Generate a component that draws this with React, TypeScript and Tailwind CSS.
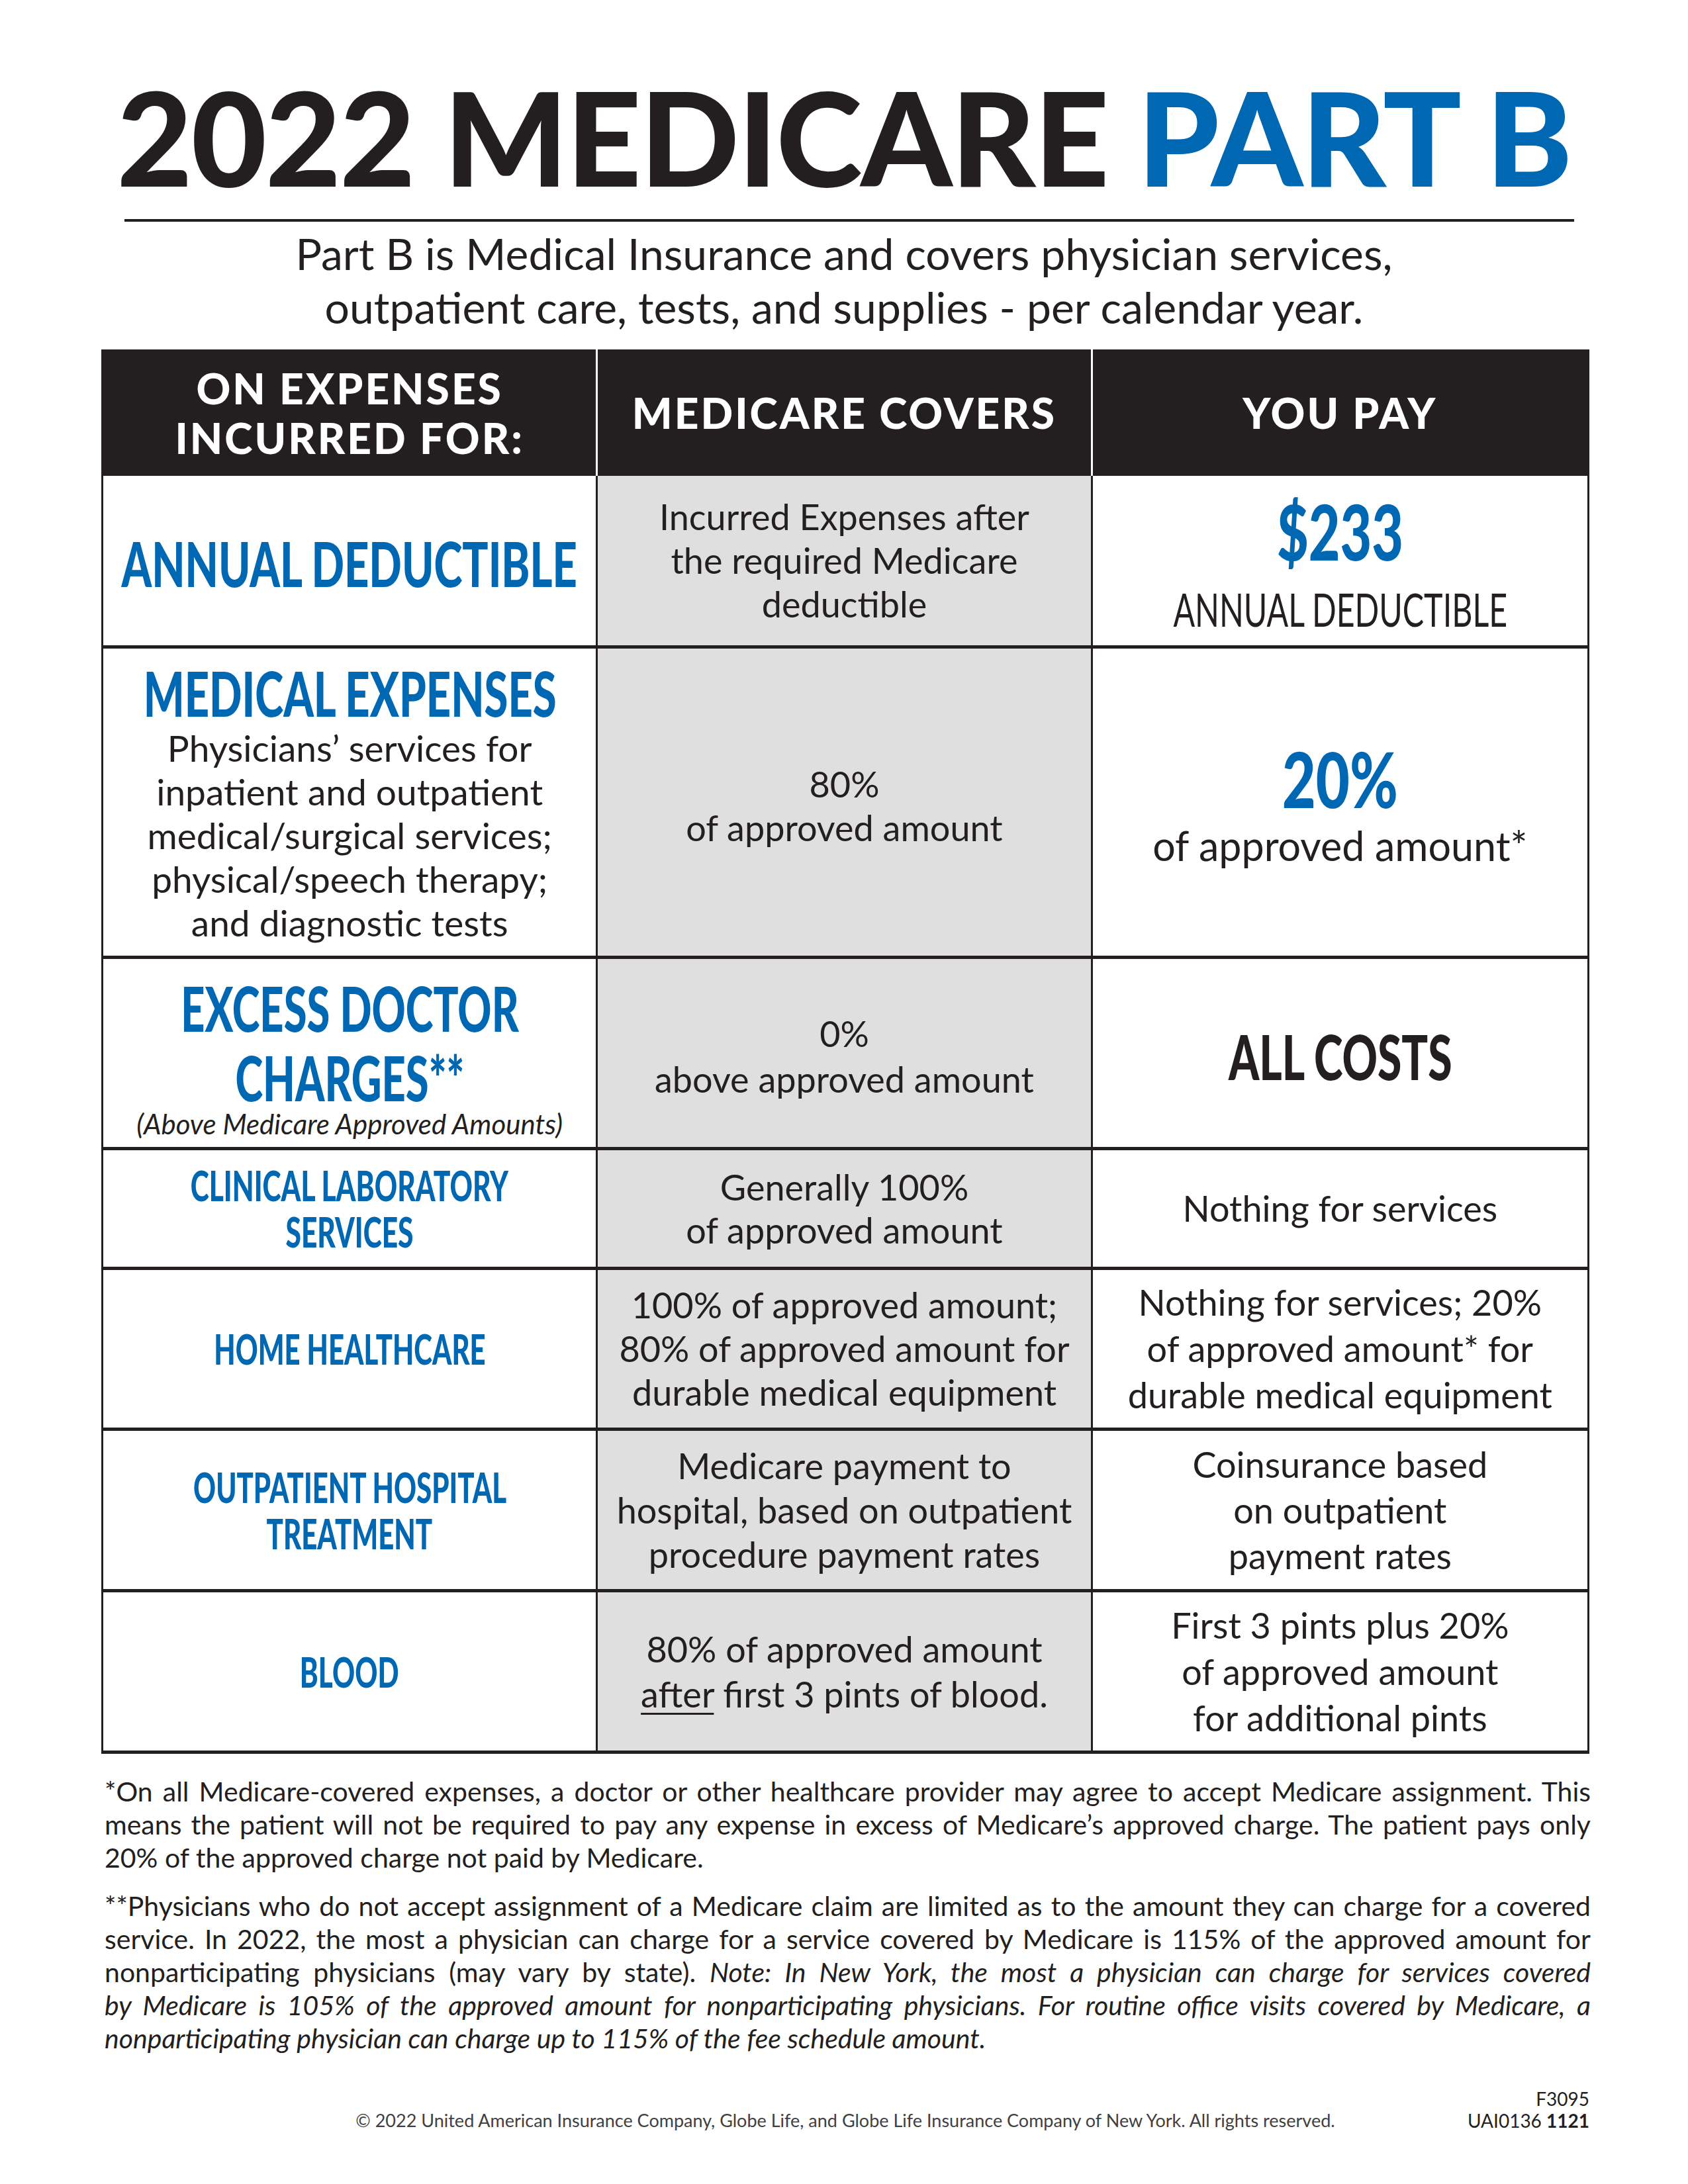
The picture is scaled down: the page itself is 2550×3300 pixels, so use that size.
import React from "react";

type P = { children?: React.ReactNode; className?: string };

function Left({ children, className = "" }: P) {
  return (
    <div
      className={
        "flex flex-col items-center justify-center text-center border-r-[3px] border-[#231f20] " +
        className
      }
    >
      {children}
    </div>
  );
}

function Mid({ children, className = "" }: P) {
  return (
    <div
      className={
        "flex flex-col items-center justify-center text-center bg-[#dfdfe0] border-r-[3px] border-[#231f20] " +
        className
      }
    >
      {children}
    </div>
  );
}

function Right({ children, className = "" }: P) {
  return (
    <div className={"flex flex-col items-center justify-center text-center " + className}>
      {children}
    </div>
  );
}

function Row({ children, className = "" }: P) {
  return (
    <div className={"grid grid-cols-3 border-b-[5px] border-[#231f20] " + className}>
      {children}
    </div>
  );
}

export default function App() {
  return (
    <div className="w-[2550px] h-[3300px] bg-white text-[#231f20] font-[Lato,sans-serif] overflow-hidden">
      {/* Title */}
      <div className="pt-[108px] text-center whitespace-nowrap text-[197px] leading-none font-black tracking-[-2px]">
        2022 MEDICARE <span className="text-[#0068b3]">PART B</span>
      </div>
      <div className="ml-[188px] mt-[26px] h-[4px] w-[2190px] bg-[#231f20]" />
      <div className="mt-[7px] text-center text-[66px] leading-[81px] whitespace-nowrap">
        Part B is Medical Insurance and covers physician services,
        <br />
        outpatient care, tests, and supplies - per calendar year.
      </div>

      {/* Table */}
      <div className="mt-[24px] ml-[153px] w-[2248px] border-x-[3px] border-[#231f20]">
        {/* Header */}
        <div className="grid grid-cols-3 h-[191px] bg-[#231f20] text-white font-black text-[64px] leading-[75px] tracking-[3px]">
          <div className="flex flex-col items-center justify-center text-center border-r-[3px] border-white whitespace-nowrap">
            <span>ON EXPENSES</span>
            <span>INCURRED FOR:</span>
          </div>
          <div className="flex items-center justify-center text-center border-r-[3px] border-white whitespace-nowrap">
            MEDICARE COVERS
          </div>
          <div className="flex items-center justify-center text-center whitespace-nowrap">YOU PAY</div>
        </div>

        {/* Row 1 */}
        <Row className="h-[261px]">
          <Left className="pt-[8px]">
            <span className="whitespace-nowrap scale-x-[0.7] text-[93px] leading-[100px] font-black text-[#0068b3]">
              ANNUAL DEDUCTIBLE
            </span>
          </Left>
          <Mid>
            <p className="text-[54px] leading-[66px] whitespace-nowrap">
              Incurred Expenses after
              <br />
              the required Medicare
              <br />
              deductible
            </p>
          </Mid>
          <Right className="pt-[14px]">
            <span className="whitespace-nowrap scale-x-[0.71] text-[116px] leading-[110px] font-black text-[#0068b3]">
              $233
            </span>
            <span className="mt-[22px] whitespace-nowrap scale-x-[0.69] text-[70px] leading-[80px]">
              ANNUAL DEDUCTIBLE
            </span>
          </Right>
        </Row>

        {/* Row 2 */}
        <Row className="h-[469px]">
          <Left>
            <span className="whitespace-nowrap scale-x-[0.7] text-[93px] leading-[100px] font-black text-[#0068b3]">
              MEDICAL EXPENSES
            </span>
            <p className="text-[55px] leading-[66px] whitespace-nowrap">
              Physicians’ services for
              <br />
              inpatient and outpatient
              <br />
              medical/surgical services;
              <br />
              physical/speech therapy;
              <br />
              and diagnostic tests
            </p>
          </Left>
          <Mid className="pt-[12px]">
            <p className="text-[54px] leading-[66px] whitespace-nowrap">
              80%
              <br />
              of approved amount
            </p>
          </Mid>
          <Right className="pt-[14px]">
            <span className="whitespace-nowrap scale-x-[0.76] text-[116px] leading-[110px] font-black text-[#0068b3]">
              20%
            </span>
            <span className="mt-[8px] whitespace-nowrap text-[61px] leading-[76px]">of approved amount*</span>
          </Right>
        </Row>

        {/* Row 3 */}
        <Row className="h-[289px]">
          <Left className="pt-[4px]">
            <span className="whitespace-nowrap scale-x-[0.68] text-[93px] leading-[105px] font-black text-[#0068b3]">
              EXCESS DOCTOR
            </span>
            <span className="whitespace-nowrap scale-x-[0.68] text-[93px] leading-[105px] font-black text-[#0068b3]">
              CHARGES**
            </span>
            <span className="whitespace-nowrap italic text-[42px] leading-[34px]">
              (Above Medicare Approved Amounts)
            </span>
          </Left>
          <Mid className="pt-[10px]">
            <p className="text-[54px] leading-[69px] whitespace-nowrap">
              0%
              <br />
              above approved amount
            </p>
          </Mid>
          <Right className="pt-[10px]">
            <span className="whitespace-nowrap scale-x-[0.71] text-[93px] leading-[100px] font-black">
              ALL COSTS
            </span>
          </Right>
        </Row>

        {/* Row 4 */}
        <Row className="h-[181px]">
          <Left>
            <span className="whitespace-nowrap scale-x-[0.675] text-[63px] leading-[70px] font-black text-[#0068b3]">
              CLINICAL LABORATORY
            </span>
            <span className="whitespace-nowrap scale-x-[0.675] text-[63px] leading-[70px] font-black text-[#0068b3]">
              SERVICES
            </span>
          </Left>
          <Mid>
            <p className="text-[54px] leading-[65px] whitespace-nowrap">
              Generally 100%
              <br />
              of approved amount
            </p>
          </Mid>
          <Right>
            <p className="text-[54px] leading-[66px] whitespace-nowrap">Nothing for services</p>
          </Right>
        </Row>

        {/* Row 5 */}
        <Row className="h-[243px]">
          <Left>
            <span className="whitespace-nowrap scale-x-[0.665] text-[63px] leading-[70px] font-black text-[#0068b3]">
              HOME HEALTHCARE
            </span>
          </Left>
          <Mid>
            <p className="text-[54px] leading-[66px] whitespace-nowrap">
              100% of approved amount;
              <br />
              80% of approved amount for
              <br />
              durable medical equipment
            </p>
          </Mid>
          <Right>
            <p className="text-[54px] leading-[70px] whitespace-nowrap">
              Nothing for services; 20%
              <br />
              of approved amount* for
              <br />
              durable medical equipment
            </p>
          </Right>
        </Row>

        {/* Row 6 */}
        <Row className="h-[244px]">
          <Left>
            <span className="whitespace-nowrap scale-x-[0.667] text-[63px] leading-[70px] font-black text-[#0068b3]">
              OUTPATIENT HOSPITAL
            </span>
            <span className="whitespace-nowrap scale-x-[0.667] text-[63px] leading-[70px] font-black text-[#0068b3]">
              TREATMENT
            </span>
          </Left>
          <Mid>
            <p className="text-[54px] leading-[67px] whitespace-nowrap">
              Medicare payment to
              <br />
              hospital, based on outpatient
              <br />
              procedure payment rates
            </p>
          </Mid>
          <Right>
            <p className="text-[54px] leading-[69px] whitespace-nowrap">
              Coinsurance based
              <br />
              on outpatient
              <br />
              payment rates
            </p>
          </Right>
        </Row>

        {/* Row 7 */}
        <Row className="h-[244px]">
          <Left>
            <span className="whitespace-nowrap scale-x-[0.67] text-[63px] leading-[70px] font-black text-[#0068b3]">
              BLOOD
            </span>
          </Left>
          <Mid>
            <p className="text-[54px] leading-[68px] whitespace-nowrap">
              80% of approved amount
              <br />
              <span className="underline decoration-[3px] underline-offset-[8px]">after</span> first 3 pints of
              blood.
            </p>
          </Mid>
          <Right>
            <p className="text-[54px] leading-[70px] whitespace-nowrap">
              First 3 pints plus 20%
              <br />
              of approved amount
              <br />
              for additional pints
            </p>
          </Right>
        </Row>
      </div>

      {/* Footnotes */}
      <div className="ml-[158px] w-[2245px] mt-[32px] text-[41px] leading-[50px]">
        <div>
          <div className="text-justify [text-align-last:justify]">
            *On all Medicare-covered expenses, a doctor or other healthcare provider may agree to accept Medicare
            assignment. This
          </div>
          <div className="text-justify [text-align-last:justify]">
            means the patient will not be required to pay any expense in excess of Medicare’s approved charge. The
            patient pays only
          </div>
          <div>20% of the approved charge not paid by Medicare.</div>
        </div>
        <div className="mt-[23px]">
          <div className="text-justify [text-align-last:justify]">
            **Physicians who do not accept assignment of a Medicare claim are limited as to the amount they can
            charge for a covered
          </div>
          <div className="text-justify [text-align-last:justify]">
            service. In 2022, the most a physician can charge for a service covered by Medicare is 115% of the
            approved amount for
          </div>
          <div className="text-justify [text-align-last:justify]">
            nonparticipating physicians (may vary by state).{" "}
            <span className="italic">
              Note: In New York, the most a physician can charge for services covered
            </span>
          </div>
          <div className="text-justify [text-align-last:justify] italic">
            by Medicare is 105% of the approved amount for nonparticipating physicians. For routine office visits
            covered by Medicare, a
          </div>
          <div className="italic">
            nonparticipating physician can charge up to 115% of the fee schedule amount.
          </div>
        </div>
      </div>

      {/* Footer */}
      <div className="ml-[153px] w-[2248px] mt-[50px] grid grid-cols-[1fr_auto_1fr] items-end">
        <div />
        <div className="text-[27px] leading-[34px] text-[#414042] whitespace-nowrap">
          © 2022 United American Insurance Company, Globe Life, and Globe Life Insurance Company of New York. All
          rights reserved.
        </div>
        <div className="justify-self-end text-right whitespace-nowrap">
          <div className="text-[28px] leading-[32px]">F3095</div>
          <div className="text-[28px] leading-[34px]">
            UAI0136 <span className="font-bold">1121</span>
          </div>
        </div>
      </div>
    </div>
  );
}
